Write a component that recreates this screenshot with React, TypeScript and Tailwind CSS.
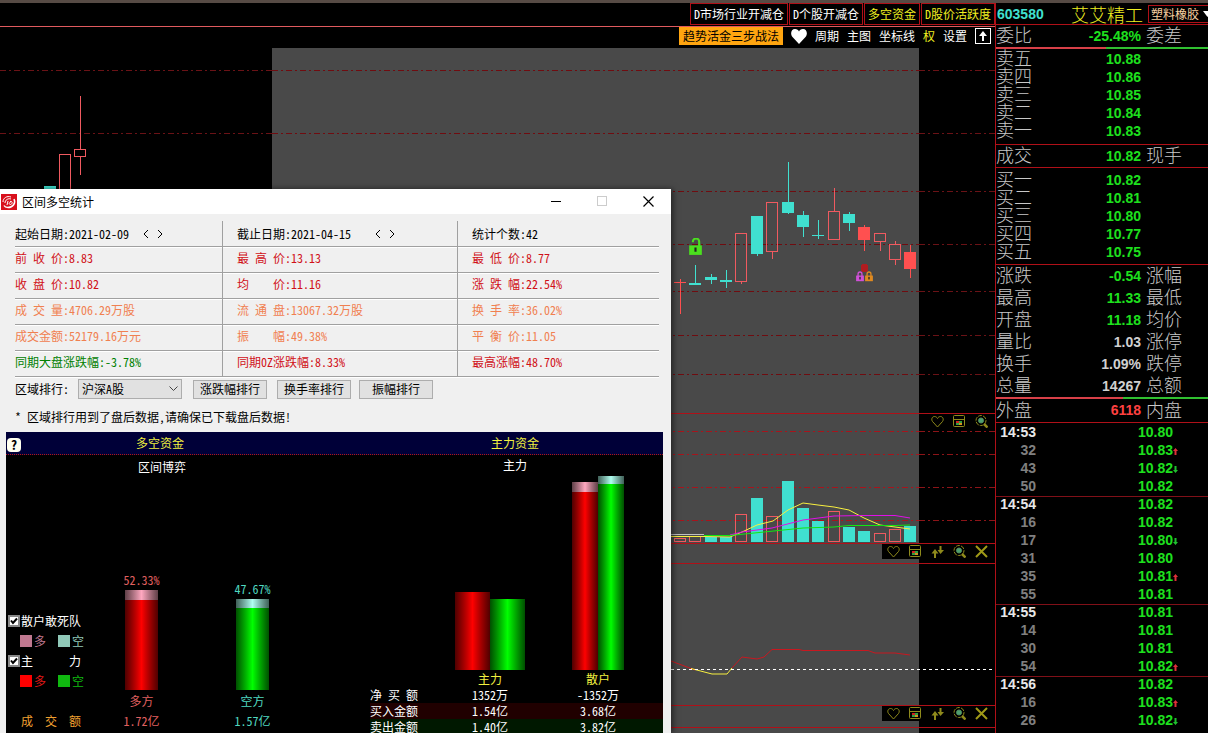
import React from 'react';

const TEAL = '#40e0d0';
const RED = '#ff5050';
const WICK = '#f05a60';

const tabs = [
  { label: 'D市场行业开减仓', active: false },
  { label: 'D个股开减仓', active: false },
  { label: '多空资金', active: true },
  { label: 'D股价活跃度', active: true },
];

// x = left edge of the body, kind: up = hollow, down = teal, hot = solid red
type Candle = { x: number; top: number; bottom: number; high: number; low: number; kind: 'up' | 'down' | 'hot' };

const candles: Candle[] = [
  { x: 44, top: 138, bottom: 150, high: 138, low: 150, kind: 'down' },
  { x: 59, top: 106, bottom: 160, high: 106, low: 160, kind: 'up' },
  { x: 74, top: 101, bottom: 109, high: 48, low: 127, kind: 'up' },
  { x: 674, top: 234, bottom: 235, high: 231, low: 266, kind: 'hot' },
  { x: 689, top: 235, bottom: 237, high: 217, low: 236, kind: 'down' },
  { x: 705, top: 229, bottom: 232, high: 226, low: 236, kind: 'down' },
  { x: 720, top: 232, bottom: 234, high: 222, low: 240, kind: 'down' },
  { x: 735, top: 185, bottom: 234, high: 185, low: 236, kind: 'up' },
  { x: 751, top: 168, bottom: 206, high: 168, low: 208, kind: 'down' },
  { x: 766, top: 154, bottom: 204, high: 154, low: 211, kind: 'up' },
  { x: 782, top: 154, bottom: 165, high: 114, low: 166, kind: 'down' },
  { x: 797, top: 167, bottom: 179, high: 163, low: 189, kind: 'down' },
  { x: 812, top: 187, bottom: 188, high: 172, low: 191, kind: 'down' },
  { x: 828, top: 163, bottom: 192, high: 140, low: 192, kind: 'up' },
  { x: 843, top: 166, bottom: 175, high: 164, low: 183, kind: 'down' },
  { x: 858, top: 179, bottom: 192, high: 177, low: 203, kind: 'hot' },
  { x: 874, top: 185, bottom: 194, high: 185, low: 203, kind: 'up' },
  { x: 889, top: 196, bottom: 212, high: 193, low: 217, kind: 'up' },
  { x: 904, top: 204, bottom: 221, high: 197, low: 230, kind: 'hot' },
];

const volumes = [
  { x: 674, h: 4, up: true },
  { x: 689, h: 6, up: true },
  { x: 705, h: 5, up: false },
  { x: 720, h: 5, up: false },
  { x: 735, h: 28, up: true },
  { x: 751, h: 44, up: false },
  { x: 766, h: 26, up: true },
  { x: 782, h: 61, up: false },
  { x: 797, h: 34, up: false },
  { x: 812, h: 21, up: false },
  { x: 828, h: 31, up: true },
  { x: 843, h: 15, up: false },
  { x: 858, h: 11, up: false },
  { x: 874, h: 9, up: true },
  { x: 889, h: 13, up: true },
  { x: 904, h: 16, up: false },
];

const sells = [
  ['卖五', '10.88'],
  ['卖四', '10.86'],
  ['卖三', '10.85'],
  ['卖二', '10.84'],
  ['卖一', '10.83'],
];

const buys = [
  ['买一', '10.82'],
  ['买二', '10.81'],
  ['买三', '10.80'],
  ['买四', '10.77'],
  ['买五', '10.75'],
];

const quotes = [
  { label: '涨跌', value: '-0.54', next: '涨幅', color: 'text-[#1ee01e]' },
  { label: '最高', value: '11.33', next: '最低', color: 'text-[#1ee01e]' },
  { label: '开盘', value: '11.18', next: '均价', color: 'text-[#1ee01e]' },
  { label: '量比', value: '1.03', next: '涨停', color: 'text-[#d0d0d0]' },
  { label: '换手', value: '1.09%', next: '跌停', color: 'text-[#d0d0d0]' },
  { label: '总量', value: '14267', next: '总额', color: 'text-[#d0d0d0]' },
];

const ticks = [
  { time: '14:53', price: '10.80', dir: '' },
  { time: '32', price: '10.83', dir: 'up' },
  { time: '43', price: '10.82', dir: 'down' },
  { time: '50', price: '10.82', dir: '' },
  { time: '14:54', price: '10.82', dir: '' },
  { time: '16', price: '10.82', dir: '' },
  { time: '17', price: '10.80', dir: 'down' },
  { time: '31', price: '10.80', dir: '' },
  { time: '35', price: '10.81', dir: 'up' },
  { time: '55', price: '10.81', dir: '' },
  { time: '14:55', price: '10.81', dir: '' },
  { time: '14', price: '10.81', dir: '' },
  { time: '30', price: '10.81', dir: '' },
  { time: '54', price: '10.82', dir: 'up' },
  { time: '14:56', price: '10.82', dir: '' },
  { time: '16', price: '10.83', dir: 'up' },
  { time: '26', price: '10.82', dir: 'down' },
];

const stats = [
  { color: 'text-black', cells: ['起始日期:2021-02-09', '截止日期:2021-04-15', '统计个数:42'] },
  { color: 'text-[#d01018]', cells: ['前 收 价:8.83', '最 高 价:13.13', '最 低 价:8.77'] },
  { color: 'text-[#d01018]', cells: ['收 盘 价:10.82', '均    价:11.16', '涨 跌 幅:22.54%'] },
  { color: 'text-[#f08050]', cells: ['成 交 量:4706.29万股', '流 通 盘:13067.32万股', '换 手 率:36.02%'] },
  { color: 'text-[#f08050]', cells: ['成交金额:52179.16万元', '振    幅:49.38%', '平 衡 价:11.05'] },
  { color: 'text-[#d01018]', cells: ['同期大盘涨跌幅:-3.78%', '同期0Z涨跌幅:8.33%', '最高涨幅:48.70%'] },
];

// three pieces: the middle one lies on the selected range
const GridLine = ({ y, bright = false }: { y: number; bright?: boolean }) => (
  <g strokeDasharray="6 3 2 3">
    <line x1="0" x2="272" y1={y + 0.5} y2={y + 0.5} stroke={bright ? '#8c1418' : '#6a1216'} />
    <line x1="272" x2="919" y1={y + 0.5} y2={y + 0.5} stroke={bright ? '#a8141c' : '#700c10'} />
    <line x1="919" x2="100%" y1={y + 0.5} y2={y + 0.5} stroke={bright ? '#8c1418' : '#6a1216'} />
  </g>
);

const Lock = ({ x, y, size, color, open = false }: { x: number; y: number; size: number; color: string; open?: boolean }) => (
  <svg x={x} y={y} width={size} height={size * 1.3} viewBox="0 0 12 16" shapeRendering="auto">
    <path d={open ? 'M3.5 4V3.5a3 3 0 0 1 6 0V8' : 'M3 8V4.5a3 3 0 0 1 6 0V8'} fill="none" stroke={color} strokeWidth="2" />
    <rect x="0" y="7" width="12" height="9" fill={color} />
    <rect x="5" y="9" width="2" height="4" fill="#222" />
  </svg>
);

const PriceChart = () => (
  <svg className="block h-full w-full" shapeRendering="crispEdges">
    <rect x="272" y="0" width="647" height="365" fill="#494949" />
    {[22, 85, 143, 196, 243, 287, 326].map((y) => <GridLine key={y} y={y} />)}
    {candles.map((c) => {
      const color = c.kind === 'down' ? TEAL : c.kind === 'hot' ? RED : WICK;
      return (
        <g key={c.x}>
          <rect x={c.x + 6} y={c.high} width="1" height={c.top - c.high} fill={color} />
          <rect x={c.x + 6} y={c.bottom} width="1" height={Math.max(0, c.low - c.bottom)} fill={color} />
          {c.kind === 'up'
            ? <rect x={c.x + 0.5} y={c.top + 0.5} width="11" height={c.bottom - c.top - 1} fill="none" stroke={color} />
            : <rect x={c.x} y={c.top} width="12" height={c.bottom - c.top} fill={color} />}
        </g>
      );
    })}
    <Lock x={689} y={190} size={13} color="#4be01e" open />
    <circle cx="864.5" cy="220" r="4" fill="#b01c20" />
    <Lock x={856} y={223} size={8} color="#d050d8" />
    <Lock x={865} y={223} size={8} color="#e08a20" />
  </svg>
);

const VolumeChart = () => (
  <svg className="block h-full w-full">
    <rect x="272" y="0" width="647" height="130" fill="#494949" />
    <g shapeRendering="crispEdges">
      {[17, 40, 73, 106].map((y) => <GridLine key={y} y={y} bright />)}
      {volumes.map((v) => v.up
        ? <rect key={v.x} x={v.x + 0.5} y={128.5 - v.h} width="11" height={v.h - 1} fill="none" stroke={WICK} />
        : <rect key={v.x} x={v.x} y={128 - v.h} width="12" height={v.h} fill={TEAL} />)}
    </g>
    <path d="M671 120.5H704" stroke="#c0c0c0" />
    <path d="M671 122.5H704L730 123L742 118L757 111L773 107L788 96L803 89L818 91L834 93L849 96L864 104L880 111L895 113L910 115" fill="none" stroke="#f8f040" />
    <path d="M730 121L742 118L772 114L803 106L834 102L864 101.5H895L910 104" fill="none" stroke="#e010e8" />
    <path d="M704 121.5H730L764 118L803 114L834 113L849 111.5H895L910 111" fill="none" stroke="#10e810" />
  </svg>
);

const TrendChart = () => (
  <svg className="block h-full w-full">
    <rect x="272" y="0" width="647" height="162" fill="#494949" />
    <path d="M0 19.5H2000" stroke="#b01018" />
    <path d="M671 117L695 126M731 125L742 113L757 115L764 113L772 105.5H799L803 106.5H868L875 109H895L910 111" fill="none" stroke="#c81820" />
    <path d="M691 124.5L712 130H727L732 124" fill="none" stroke="#f8f040" />
    <path d="M671 125.5H2000" stroke="#fff" strokeDasharray="3 3" />
  </svg>
);

const HeartIcon = () => (
  <svg width="13" height="13" viewBox="0 0 13 13" fill="none" stroke="#8f8a1c">
    <path d="M6.5 12L1.5 6.5C0 4.5 1 1.5 3.5 1.5C5 1.5 6 2.5 6.5 3.5C7 2.5 8 1.5 9.5 1.5C12 1.5 13 4.5 11.5 6.5Z" />
  </svg>
);

const PanelIcon = () => (
  <svg width="13" height="13" viewBox="0 0 13 13" fill="none" stroke="#8f8a1c">
    <rect x="0.5" y="0.5" width="11" height="11" rx="1" />
    <path d="M1 4.5H12" />
    <rect x="3" y="6" width="3" height="2" fill="#d02020" stroke="none" />
    <rect x="6" y="6" width="3" height="2" fill="#30a040" stroke="none" />
    <rect x="3" y="8" width="3" height="2" fill="#30a040" stroke="none" />
    <rect x="6" y="8" width="3" height="2" fill="#d09020" stroke="none" />
  </svg>
);

const SwapIcon = () => (
  <svg width="13" height="13" viewBox="0 0 13 13" fill="#8f8a1c">
    <path d="M4 4L7.5 8.5H5V13H3V8.5H0.5Z" />
    <path d="M9.5 9L13 5H10.5V1H8.5V5H6.5Z" />
  </svg>
);

const ZoomIcon = () => (
  <svg width="13" height="13" viewBox="0 0 13 13" fill="none" stroke="#8f8a1c">
    <circle cx="6" cy="5.5" r="5" strokeDasharray="4 1" />
    <circle cx="6" cy="5.5" r="2.5" fill="#50a070" stroke="#4f8f60" />
    <path d="M9 9L12.5 12.5" strokeWidth="2.5" />
  </svg>
);

const CrossIcon = () => (
  <svg width="13" height="13" viewBox="0 0 13 13" fill="none" stroke="#a09a18" strokeWidth="2">
    <path d="M1 1L12 12M12 1L1 12" />
  </svg>
);

const PanelTools = ({ full = true }: { full?: boolean }) => (
  <div className="absolute top-0 right-0 flex h-[15px] items-center bg-black pr-[3px]">
    <button aria-label="收藏" className="flex w-[22px] justify-center"><HeartIcon /></button>
    <button aria-label="窗口" className="flex w-[22px] justify-center"><PanelIcon /></button>
    {full && <button aria-label="排序" className="flex w-[22px] justify-center"><SwapIcon /></button>}
    <button aria-label="放大" className="flex w-[22px] justify-center"><ZoomIcon /></button>
    {full && <button aria-label="关闭指标" className="flex w-[22px] justify-center"><CrossIcon /></button>}
  </div>
);

const DateArrows = ({ wide = false }: { wide?: boolean }) => (
  <span className={wide ? 'ml-6 flex gap-2' : 'ml-[14px] flex gap-2'}>
    <button aria-label="前一天">
      <svg width="6" height="10" viewBox="0 0 6 10" fill="none" stroke="#000"><path d="M5 1L1 5L5 9" /></svg>
    </button>
    <button aria-label="后一天">
      <svg width="6" height="10" viewBox="0 0 6 10" fill="none" stroke="#000"><path d="M1 1L5 5L1 9" /></svg>
    </button>
  </span>
);

const redBar = 'bg-linear-to-r from-[#500000] via-[#ff0000] to-[#500000]';
const greenBar = 'bg-linear-to-r from-[#005000] via-[#00ff00] to-[#005000]';
const pinkCap = 'bg-linear-to-r from-[#604048] via-[#ffa8c0] to-[#604048]';
const mintCap = 'bg-linear-to-r from-[#406058] via-[#b0fff0] to-[#406058]';

const Bar = ({ height, cap, width, green = false }: { height: number; cap: number; width: string; green?: boolean }) => (
  <div className={width} style={{ height }}>
    <div className={green ? mintCap : pinkCap} style={{ height: cap }} />
    <div className={green ? greenBar : redBar} style={{ height: height - cap }} />
  </div>
);

const Legend = ({ id, label, longColor, shortColor, longText, shortText }: Record<string, string>) => (
  <>
    <div className="flex h-5 items-center gap-px whitespace-pre pl-[2px] text-white">
      <span className="relative flex">
        <input id={id} type="checkbox" defaultChecked className="h-3 w-3 appearance-none border-2 border-[#888] bg-white" />
        <svg className="pointer-events-none absolute inset-0" width="12" height="12" viewBox="0 0 12 12" fill="none" stroke="#000" strokeWidth="2">
          <path d="M3 5.5L5 8L9 3.5" />
        </svg>
      </span>
      <label htmlFor={id}>{label}</label>
    </div>
    <div className="flex h-5 items-center pl-[14px]">
      <span className={`mr-[2px] h-3 w-3 ${longColor}`} />
      <span className={longText}>多</span>
      <span className={`mr-[2px] ml-3 h-3 w-3 ${shortColor}`} />
      <span className={shortText}>空</span>
    </div>
  </>
);

const StatsDialog = () => (
  <section role="dialog" aria-label="区间多空统计" className="absolute top-[189px] bottom-0 left-0 w-[671px] overflow-hidden bg-[#f0f0f0] text-black shadow-[2px_0_6px_#0008]">
    <header className="flex h-[25px] items-center bg-white pl-px">
      <svg width="16" height="16" viewBox="0 0 16 16" fill="none" stroke="#fff">
        <rect width="16" height="16" fill="#d8101c" stroke="none" />
        <path d="M2 8C2 4 6 1.5 10 3M4 9C4 6 7 4 10 5" />
        <path d="M13 5C15 9 12 13.5 7 13.5C5 13.5 3.5 12.5 3 11.5" strokeWidth="1.5" />
        <path d="M6 11L7 7M9 7.5C11.5 6.5 12 10 9.5 10.5C7.5 10.5 8 8 9.5 8.5" />
      </svg>
      <h1 className="ml-[5px] flex-1">区间多空统计</h1>
      <button aria-label="最小化" className="flex w-[46px] justify-center">
        <svg width="11" height="11" stroke="#000"><path d="M0 5.5H10" /></svg>
      </button>
      <button aria-label="最大化" className="flex w-[46px] justify-center">
        <svg width="11" height="11" fill="none" stroke="#ccc"><rect x="0.5" y="0.5" width="9" height="9" /></svg>
      </button>
      <button aria-label="关闭" className="flex w-[46px] justify-center">
        <svg width="11" height="11" stroke="#000" strokeWidth="1.2"><path d="M0.5 0.5L10.5 10.5M10.5 0.5L0.5 10.5" /></svg>
      </button>
    </header>

    <div className="mt-[7px] mr-3 ml-[15px]">
      {stats.map((row, r) => (
        <div key={r} className={`grid h-[26px] grid-cols-[208px_235px_1fr] whitespace-pre ${row.color}`}>
          {row.cells.map((cell, i) => (
            <div
              key={cell}
              className={`flex items-center border-b border-[#a0a0a0] shadow-[0_1px_0_#fff] ${r > 0 ? 'pb-[3px]' : ''} ${i < 2 ? 'border-r' : ''} ${i > 0 ? 'pl-[14px]' : ''} ${r === 5 && i === 0 ? 'text-[#008000]' : ''}`}
            >
              {cell}
              {r === 0 && i < 2 && <DateArrows wide={i === 1} />}
            </div>
          ))}
        </div>
      ))}
    </div>

    <div className="mt-[2px] flex h-5 items-center pl-[15px]">
      <label htmlFor="region" className="w-[63px]">区域排行:</label>
      <span className="relative">
        <select id="region" className="block h-5 w-[104px] appearance-none border border-[#adadad] bg-[#e1e1e1] pl-[3px]">
          <option>沪深A股</option>
        </select>
        <svg className="pointer-events-none absolute top-[7px] right-1" width="9" height="6" fill="none" stroke="#444"><path d="M0.5 0.5L4.5 4.5L8.5 0.5" /></svg>
      </span>
      <button className="ml-[11px] h-[19px] w-[74px] border border-[#adadad] bg-[#e1e1e1]">涨跌幅排行</button>
      <button className="ml-[10px] h-[19px] w-[74px] border border-[#adadad] bg-[#e1e1e1]">换手率排行</button>
      <button className="ml-2 h-[19px] w-[74px] border border-[#adadad] bg-[#e1e1e1]">振幅排行</button>
    </div>
    <p className="mt-[9px] h-[18px] pl-[15px] leading-[18px]">* 区域排行用到了盘后数据,请确保已下载盘后数据!</p>

    <div className="mt-[6px] mr-2 ml-[6px] bg-black">
      <div className="relative flex h-[23px] items-center gap-[53px] border-b border-dotted border-[#b01818] bg-[#000038] text-[#f0f040]">
        <button aria-label="帮助" className="absolute top-[6px] left-px flex h-[14px] w-[14px] items-center justify-center rounded-sm bg-[#fffff0] text-[13px] font-bold text-black">?</button>
        <h2 className="w-[308px] text-center">多空资金</h2>
        <h2 className="flex-1 text-center">主力资金</h2>
      </div>
      <div className="flex gap-[53px]">
        <div className="w-[308px]">
          <h3 className="h-6 pl-1 text-center leading-6 text-white">区间博弈</h3>
          <div className="flex h-[252px] items-end">
            <div className="w-20">
              <Legend id="retail" label="散户敢死队" longColor="bg-[#c07890]" shortColor="bg-[#90c8b8]" longText="text-[#c07890]" shortText="text-[#90c8b8]" />
              <Legend id="main" label="主      力" longColor="bg-[#ff0000]" shortColor="bg-[#10b810]" longText="text-[#e01818]" shortText="text-[#10b810]" />
              <div className="mt-5 h-5 whitespace-pre pl-[15px] leading-5 text-[#f0a030]">成  交  额</div>
            </div>
            <div className="flex w-[111px] flex-col items-center text-[#e06060]">
              <div className="h-5 leading-5">52.33%</div>
              <Bar height={100} cap={10} width="w-[33px]" />
              <div className="mt-px h-5 leading-5">多方</div>
              <div className="h-5 leading-5">1.72亿</div>
            </div>
            <div className="flex w-[111px] flex-col items-center text-[#50d8c0]">
              <div className="h-5 leading-5">47.67%</div>
              <Bar height={91} cap={9} width="w-[33px]" green />
              <div className="mt-px h-5 leading-5">空方</div>
              <div className="h-5 leading-5">1.57亿</div>
            </div>
          </div>
        </div>
        <div className="flex-1">
          <h3 className="h-5 text-center leading-5 text-white">主力</h3>
          <div className="ml-[69px] grid h-[195px] grid-cols-[108px_108px]">
            <div className="flex items-end justify-center">
              <Bar height={78} cap={0} width="w-[35px]" />
              <Bar height={71} cap={0} width="w-[35px]" green />
            </div>
            <div className="flex items-end justify-center">
              <Bar height={188} cap={10} width="w-[26px]" />
              <Bar height={194} cap={8} width="w-[26px]" green />
            </div>
          </div>
          <table className="ml-[3px] table-fixed whitespace-pre text-center leading-4 text-white">
            <thead>
              <tr className="text-[#f0f040]">
                <td className="w-[66px]" />
                <th className="h-[17px] w-[108px] font-normal">主力</th>
                <th className="w-[108px] font-normal">散户</th>
                <td className="w-[11px]" />
              </tr>
            </thead>
            <tbody>
              <tr>
                <th className="text-left font-normal">净 买 额</th>
                <td>1352万</td>
                <td>-1352万</td>
                <td />
              </tr>
              <tr className="bg-[#200000]">
                <th className="text-left font-normal">买入金额</th>
                <td>1.54亿</td>
                <td>3.68亿</td>
                <td />
              </tr>
              <tr className="bg-[#001800]">
                <th className="text-left font-normal">卖出金额</th>
                <td>1.40亿</td>
                <td>3.82亿</td>
                <td />
              </tr>
            </tbody>
          </table>
        </div>
      </div>
    </div>
  </section>
);

const QuoteRow = ({ label, value, next = '', color = 'text-[#1ee01e]', height }: { label: string; value: string; next?: string; color?: string; height: string }) => (
  <div className={`grid grid-cols-[36px_109px_1fr] items-center text-[18px] leading-[15px] font-light text-[#c8c8c8] ${height}`}>
    <span className="pb-[3px]">{label}</span>
    <span className={`text-right font-['Liberation_Sans',sans-serif] text-[14px] font-bold ${color}`}>{value}</span>
    <span className="pb-[3px] pl-[5px]">{next}</span>
  </div>
);

const QuotePanel = () => (
  <aside className="w-[213px] shrink-0 border-l border-[#b01018] leading-none">
    <div className="flex h-[22px] items-center border-b border-[#b01018]">
      <span className="w-[75px] shrink-0 pl-px font-['Liberation_Sans',sans-serif] text-[14px] font-bold text-[#40e0d0]">603580</span>
      <h1 className="w-[77px] shrink-0 text-[18px] font-light text-[#f0f020]">艾艾精工</h1>
      <span className="relative shrink-0">
        <select aria-label="行业" className="block h-[18px] w-[66px] appearance-none border border-[#b01018] bg-black pl-[2px] text-[#f8d0a0]">
          <option>塑料橡胶</option>
        </select>
        <svg className="pointer-events-none absolute top-[6px] right-[2px]" width="9" height="6" fill="#fff"><path d="M0 0H9L4.5 6Z" /></svg>
      </span>
    </div>
    <QuoteRow label="委比" value="-25.48%" next="委差" height="h-[22px]" />
    <div className="flex h-[2px]">
      <div className="w-[52%] bg-[#d84048]" />
      <div className="flex-1 bg-[#30c030]" />
    </div>
    <div className="border-b border-[#b01018] pt-px pb-1">
      {sells.map(([label, value]) => <QuoteRow key={label} label={label} value={value} height="h-[18px]" />)}
    </div>
    <QuoteRow label="成交" value="10.82" next="现手" height="h-[22px]" />
    <div className="border-y border-[#b01018] pt-[3px] pb-[3px]">
      {buys.map(([label, value]) => <QuoteRow key={label} label={label} value={value} height="h-[18px]" />)}
    </div>
    {quotes.map((q) => <QuoteRow key={q.label} {...q} height="h-[22px]" />)}
    <div className="flex h-[2px]">
      <div className="w-[60%] bg-[#d84048]" />
      <div className="flex-1 bg-[#30c030]" />
    </div>
    <div className="mb-px border-b border-[#b01018]">
      <QuoteRow label="外盘" value="6118" next="内盘" color="text-[#ff4040]" height="h-[23px]" />
    </div>
    <table className="w-full table-fixed border-separate border-spacing-0 font-['Liberation_Sans',sans-serif] text-[14px] leading-[15px] font-bold">
      <tbody>
        {ticks.map((t, i) => {
          const minute = t.time.length > 2;
          const line = minute && i > 0 ? 'border-t border-[#801018] align-top' : 'border-t border-transparent align-top';
          return (
            <tr key={i}>
              <td className={`h-[18px] w-10 text-right ${line} ${minute ? 'text-[#e8e8e8]' : 'text-[#808080]'}`}>{t.time}</td>
              <td className={`w-[137px] text-right text-[#1ee01e] ${line}`}>{t.price}</td>
              <td className={`pt-[5px] ${line}`}>
                {t.dir === 'up' && <svg width="5" height="7" fill="#e03038"><path d="M2.5 0L5 3H3.5V7H1.5V3H0Z" /></svg>}
                {t.dir === 'down' && <svg width="5" height="7" fill="#20c030"><path d="M2.5 7L5 4H3.5V0H1.5V4H0Z" /></svg>}
              </td>
            </tr>
          );
        })}
      </tbody>
    </table>
  </aside>
);

const App: React.FC = () => {
  return (
    <div className="relative flex h-screen flex-col overflow-hidden bg-black font-['Noto_Sans_CJK_SC',sans-serif] text-[12px] leading-4 text-white [font-feature-settings:'hwid']">
      <div className="h-[3px] shrink-0 bg-[#574b45]" />
      <div className="flex min-h-0 flex-1">
        <main className="flex min-w-0 flex-1 flex-col">
          <nav className="flex h-6 shrink-0 items-start justify-end gap-px border-b border-[#e05a5e]">
            {tabs.map((tab) => (
              <button
                key={tab.label}
                className={`h-[22px] border border-[#b01018] px-[3px] whitespace-nowrap ${tab.active ? 'text-[#f0f020]' : 'text-white'}`}
              >
                {tab.label}
              </button>
            ))}
          </nav>
          <div className="flex h-[21px] shrink-0 items-start justify-end gap-2 pr-1 leading-[18px]">
            <button className="bg-[#ffa510] px-1 text-black">趋势活金三步战法</button>
            <button aria-label="自选" className="mt-px">
              <svg width="16" height="16" viewBox="0 0 16 16" fill="#fff"><path d="M8 16L1.5 9C-1 6 0 1 4 1C6 1 7.5 2 8 3.5C8.5 2 10 1 12 1C16 1 17 6 14.5 9Z" /></svg>
            </button>
            <button>周期</button>
            <button>主图</button>
            <button>坐标线</button>
            <button className="text-[#f0f020]">权</button>
            <button>设置</button>
            <button aria-label="展开" className="mt-px">
              <svg width="16" height="16" viewBox="0 0 16 16" fill="none" stroke="#fff">
                <rect x="0.5" y="0.5" width="15" height="15" />
                <path d="M8 13V6" strokeWidth="2" />
                <path d="M8 3L12 8H4Z" fill="#fff" stroke="none" />
              </svg>
            </button>
          </div>
          <div className="h-[365px] shrink-0"><PriceChart /></div>
          <div className="relative h-[130px] shrink-0 border-t border-[#b01018]">
            <VolumeChart />
            <PanelTools full={false} />
          </div>
          <div className="relative h-[162px] shrink-0 border-t border-[#b01018]">
            <TrendChart />
            <PanelTools />
          </div>
          <div className="relative min-h-0 flex-1 border-t border-[#b01018]">
            <svg className="block h-full w-full">
              <rect x="272" y="0" width="647" height="100%" fill="#494949" />
              <path d="M0 21.5H2000" stroke="#b01018" />
            </svg>
            <PanelTools />
          </div>
        </main>
        <QuotePanel />
      </div>
      <StatsDialog />
    </div>
  );
};

export default App;
